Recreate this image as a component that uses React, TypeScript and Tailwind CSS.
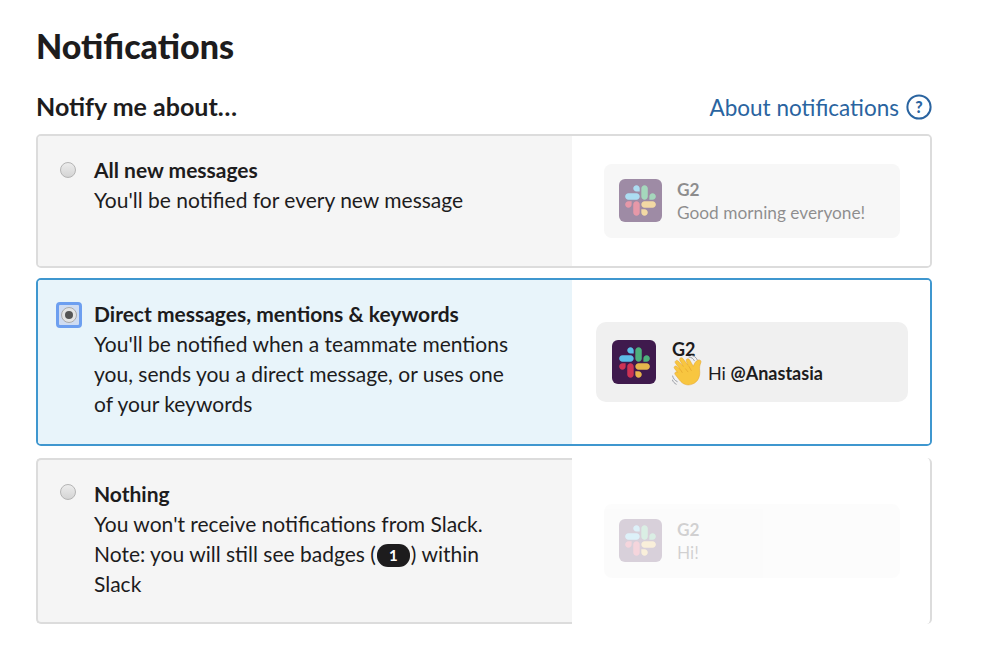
const LATO = "font-['Lato',sans-serif]";

function SlackTile({ className }: { className: string }) {
  return (
    <div className={`flex items-center justify-center rounded-[6px] bg-[#3f1a4d] ${className}`}>
      <svg viewBox="0 0 127 127" className="h-[31px] w-[31px]">
        <path fill="#CF3354" d="M27.2 80c0 7.3-5.9 13.2-13.2 13.2C6.7 93.2.8 87.3.8 80c0-7.3 5.900-13.2 13.2-13.2h13.2V80zm6.600 0c0-7.3 5.900-13.2 13.2-13.2 7.300 0 13.200 5.900 13.200 13.200v33c0 7.300-5.900 13.200-13.200 13.200-7.300 0-13.200-5.900-13.200-13.200V80z" />
        <path fill="#5CBDE6" d="M47 27c-7.3 0-13.2-5.900-13.200-13.200C33.800 6.500 39.700.6 47 .6c7.300 0 13.200 5.900 13.200 13.200V27H47zm0 6.700c7.300 0 13.200 5.900 13.200 13.200 0 7.300-5.900 13.200-13.200 13.200H13.900C6.600 60.100.7 54.200.7 46.900c0-7.300 5.900-13.200 13.200-13.200H47z" />
        <path fill="#4DB07C" d="M99.900 46.900c0-7.300 5.900-13.200 13.200-13.200 7.300 0 13.200 5.900 13.200 13.200 0 7.300-5.900 13.200-13.200 13.200H99.900V46.900zm-6.600 0c0 7.300-5.900 13.200-13.200 13.200-7.300 0-13.200-5.900-13.200-13.200V13.800C66.900 6.500 72.800.6 80.100.6c7.300 0 13.200 5.900 13.200 13.200v33.100z" />
        <path fill="#E6B44C" d="M80.100 99.800c7.300 0 13.200 5.900 13.200 13.200 0 7.300-5.900 13.200-13.200 13.200-7.300 0-13.200-5.900-13.200-13.200V99.800h13.200zm0-6.600c-7.300 0-13.200-5.900-13.200-13.200 0-7.300 5.900-13.200 13.200-13.200h33.100c7.300 0 13.200 5.900 13.200 13.200 0 7.300-5.900 13.200-13.200 13.200H80.100z" />
      </svg>
    </div>
  );
}

function Wave() {
  return (
    <svg viewBox="0 0 32 32" className="h-[32px] w-[32px] shrink-0">
      <g fill="none" stroke="#9a9ea6" strokeWidth="1" strokeLinecap="round">
        <path d="M17 2c2.500.2 4.300 1.500 5.300 3.700" />
        <path d="M19 .3c3 .3 5.200 2 6.300 4.500" />
        <path d="M.6 21c.6 2.600 2.300 4.600 4.600 5.600" />
        <path d="M.4 25c.8 2 2 3.300 3.800 4.200" />
      </g>
      <path
        fill="#f8c640"
        stroke="#e3a32c"
        strokeWidth=".5"
        d="M2.500 13.500c-1.200-1.300.7-3.500 2.300-2.100l3.600 3.200-4.900-6.400C2.200 6.500 4.600 4.300 6.300 6l5 5.400-3.400-6c-1.200-2 1.500-3.700 3-1.900l5.100 6.800-1.700-4.200c-.8-2.100 2-3.300 3.200-1.400l3.800 6.600c1-2.800 2.600-5.700 5-6.300 2-.4 3.200.9 2.500 2.700-1.100 2.500-1.400 5-1.100 7.700.6 6.400-1.800 11.600-7.300 13.700-5.200 2-9.500.2-12.700-3.800L3.200 19.600c-1.300-1.700.8-3.600 2.300-2.200L2.500 13.500z"
      />
      <path fill="none" stroke="#e3a32c" strokeWidth=".7" strokeLinecap="round" d="M10.200 17.500 8.800 15.200M13.500 13.800l2.400 3M17 11.500l2.300 4" />
    </svg>
  );
}

function Preview({
  name,
  message,
  fade,
}: {
  name: string;
  message: string;
  fade: string;
}) {
  return (
    <div className={`flex h-[74px] w-[296px] items-center gap-[15px] rounded-[8px] bg-[#f0f0f0] pl-[15px] ${fade}`}>
      <SlackTile className="mb-[2px] h-[43px] w-[43px]" />
      <div className="text-[17.300px] leading-[23px] text-[#1d1c1d]">
        <div className="font-bold">{name}</div>
        <div>{message}</div>
      </div>
    </div>
  );
}

export default function App() {
  return (
    <div className={`min-h-[656px] bg-white pl-[36px] pr-[52px] pt-[25px] ${LATO} text-[#1d1c1d]`}>
      <h1 className="text-[34px] font-black leading-[42px]">Notifications</h1>

      <div className="mt-[22px] flex h-[34px] items-center justify-between">
        <h2 className="text-[25px] font-bold leading-[34px]">Notify me about…</h2>
        <a className="mt-[4px] flex items-center gap-[7px] text-[22.500px] leading-[30px] text-[#2a64a0]">
          About notifications
          <svg viewBox="0 0 26 26" className="-mt-[2px] h-[26px] w-[26px]">
            <circle cx="13" cy="13" r="11.600" fill="none" stroke="#2a64a0" strokeWidth="2" />
            <text x="13" y="18.500" textAnchor="middle" fontSize="16" fontWeight="900" fill="#2a64a0" fontFamily="Lato">?</text>
          </svg>
        </a>
      </div>

      <div className="mt-[11px] flex flex-col">
        {/* All new messages */}
        <div className="flex h-[134px] overflow-hidden rounded-[5px] border-2 border-[#dcdcdc]">
          <div className="flex w-[534px] bg-[#f5f5f5] pl-[22px] pt-[19px]">
            <span className="mt-[7px] h-[16px] w-[16px] shrink-0 rounded-full border border-[#b4b4b4] bg-[linear-gradient(#ececec,#d4d4d4)]" />
            <div className="ml-[18px] text-[21px] leading-[30px]">
              <div className="font-bold">All new messages</div>
              <div>You'll be notified for every new message</div>
            </div>
          </div>
          <div className="flex flex-1 items-center justify-center bg-white pl-[2px]">
            <Preview name="G2" message="Good morning everyone!" fade="opacity-50" />
          </div>
        </div>

        {/* Direct messages */}
        <div className="mt-[10px] flex h-[168px] overflow-hidden rounded-[5px] border-2 border-[#3f97cf]">
          <div className="flex w-[534px] bg-[#e8f4fa] pl-[18px] pt-[19px]">
            <span className="mt-[3px] flex h-[26px] w-[26px] shrink-0 items-center justify-center rounded-[4px] border-[3px] border-[#6d9ff0] bg-[#cfdcf2]">
              <span className="flex h-[16px] w-[16px] items-center justify-center rounded-full border border-[#aaa] bg-[#e4e4e4]">
                <span className="h-[8px] w-[8px] rounded-full bg-[#555]" />
              </span>
            </span>
            <div className="ml-[12px] text-[21px] leading-[30px]">
              <div className="font-bold">Direct messages, mentions &amp; keywords</div>
              <div className="w-[420px]">You'll be notified when a teammate mentions you, sends you a direct message, or uses one of your keywords</div>
            </div>
          </div>
          <div className="flex flex-1 items-center justify-center bg-white pl-[2px]">
            <div className="flex h-[80px] w-[312px] items-center gap-[16px] rounded-[10px] bg-[#f0f0f0] pl-[16px]">
              <SlackTile className="h-[44px] w-[44px]" />
              <div className="text-[18px] leading-[22px]">
                <div className="font-bold">G2</div>
                <div className="-mt-[5px] flex items-center gap-[4px]">
                  <Wave />
                  <span className="mt-[5px]">Hi <span className="font-bold">@Anastasia</span></span>
                </div>
              </div>
            </div>
          </div>
        </div>

        {/* Nothing */}
        <div className="mt-[12px] flex h-[166px]">
          <div className="flex w-[536px] rounded-l-[5px] border-y-2 border-l-2 border-[#dcdcdc] bg-[#f5f5f5] pl-[22px] pt-[19px]">
            <span className="mt-[5px] h-[16px] w-[16px] shrink-0 rounded-full border border-[#b4b4b4] bg-[linear-gradient(#ececec,#d4d4d4)]" />
            <div className="ml-[18px] text-[21px] leading-[30px]">
              <div className="font-bold">Nothing</div>
              <div className="w-[400px]">
                You won't receive notifications from Slack. Note: you will still see badges (
                <span className="mx-[1px] inline-flex h-[23px] w-[33px] -translate-y-[1px] items-center justify-center rounded-[11px] bg-[#1d1c1d] text-[15px] font-bold leading-none text-white">1</span>
                ) within Slack
              </div>
            </div>
          </div>
          <div className="flex flex-1 items-center justify-center rounded-r-[5px] border-r-2 border-[#dcdcdc] bg-white pl-[2px]">
            <Preview name="G2" message="Hi!" fade="opacity-20" />
          </div>
        </div>
      </div>
    </div>
  );
}
